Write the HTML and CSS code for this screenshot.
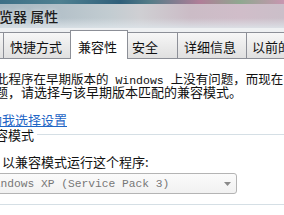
FILE: index.html
```html
<!DOCTYPE html>
<html lang="zh-CN">
<head>
<meta charset="utf-8">
<title>属性</title>
<link rel="stylesheet" href="styles.css">
</head>
<body>
<div class="window">
  <div class="titlebar"><span class="title">浏览器 属性</span></div>
  <div class="client">
    <div class="tabs">
      <div class="tab t0">常规</div>
      <div class="tab t1">快捷方式</div>
      <div class="tab sel">兼容性</div>
      <div class="tab t3">安全</div>
      <div class="tab t4">详细信息</div>
      <div class="tab t5">以前的版本</div>
    </div>
    <div class="panel">
      <p class="desc">
        <span class="line l1">如果此程序在早期版本的<span class="lat"> Windows </span>上没有问题，而现在</span>
        <span class="line l2">出现问题，请选择与该早期版本匹配的兼容模式。</span>
      </p>
      <a class="help">帮助我选择设置</a>
      <div class="group">
        <div class="group-head"><span class="group-label">兼容模式</span><span class="rule"></span></div>
        <div class="check">以兼容模式运行这个程序:</div>
        <div class="select"><span class="select-text">Windows XP (Service Pack 3)</span><svg class="arrow" width="7" height="4" viewBox="0 0 7 4"><path d="M0 0H7L3.5 4Z" fill="#8a8a8a"/></svg></div>
      </div>
      <div class="group2"><span class="rule"></span></div>
    </div>
  </div>
</div>
</body>
</html>
```

FILE: styles.css
```css
html, body {
  margin: 0;
  padding: 0;
}
body {
  width: 284px;
  height: 215px;
  overflow: hidden;
  background: #fff;
  font-family: "Noto Sans CJK SC", "Noto Sans", sans-serif;
  color: #111;
}
.window {
  width: 284px;
  height: 215px;
  overflow: hidden;
}
.titlebar {
  height: 28px;
  display: flex;
  align-items: center;
  overflow: hidden;
  background:
    linear-gradient(90deg, #3d6f86 0, #4f8091 60px, #2f5f7a 120px, #557c88 150px, #b07e98 200px, #8fa890 240px, #c896b0 284px) top left / 100% 4px no-repeat,
    linear-gradient(180deg, rgba(255,255,255,0) 0, rgba(255,255,255,0) 18px, rgba(222,229,234,0.85) 28px),
    linear-gradient(90deg, #a9b9c3 0, #b4c1c9 60px, #c2ccd1 110px, #cfcfd3 140px, #cbbcc6 190px, #d0bdc9 240px, #cbbfc9 284px);
}
.title {
  margin-left: -15px;
  padding-top: 3px;
  font-size: 14px;
  font-weight: 500;
  color: #1c1c1c;
  white-space: nowrap;
  text-shadow: 0 0 5px rgba(255,255,255,0.7);
}
.client {
  background: #eef0f2;
  padding-top: 2px;
}
.tabs {
  display: flex;
  align-items: flex-end;
  height: 28px;
  white-space: nowrap;
  font-size: 13px;
}
.tab {
  box-sizing: border-box;
  height: 26px;
  flex: none;
  border: 1px solid #8c8f97;
  border-bottom: none;
  margin-left: -1px;
  padding: 3px 0 0 6px;
  line-height: 22px;
  background: linear-gradient(180deg, #f7f7f7 0, #ececec 45%, #e0e0e0 100%);
  color: #111;
  overflow: hidden;
}
.t0 { width: 41px; margin-left: -37px; }
.t1 { width: 68px; padding-left: 6px; }
.sel {
  position: relative;
  z-index: 1;
  width: 58px;
  height: 29px;
  margin-bottom: -1px;
  padding-top: 5px;
  padding-left: 7px;
  background: #fff;
}
.t3 { width: 51px; padding-left: 4px; }
.t4 { width: 70px; padding-left: 6px; }
.t5 { width: 80px; padding-left: 5px; }
.panel {
  background: #fff;
  border-top: 1px solid #8c8f97;
  height: 160px;
  font-size: 13px;
}
.desc {
  margin: 13px 0 0;
  line-height: 13px;
  white-space: nowrap;
}
.line {
  display: block;
  height: 13px;
}
.l1 {
  margin-left: -29px;
  font-size: 12.5px;
}
.l2 { margin-left: -44px; }
.lat {
  font-family: "Liberation Mono", monospace;
  font-size: 11.5px;
  line-height: 0;
  white-space: pre;
}
.help {
  display: block;
  margin: 15px 0 0 -24px;
  height: 13px;
  line-height: 13px;
  color: #1f66c6;
  text-decoration: underline;
  white-space: nowrap;
}
.group {
  margin-top: 2px;
}
.group-head {
  display: flex;
  align-items: center;
  height: 13px;
  line-height: 13px;
  margin-left: -18px;
}
.group-label {
  flex: none;
  padding-right: 3px;
}
.rule {
  flex: 1;
  height: 1px;
  background: #d5dfe5;
}
.check {
  margin: 14px 0 0 2px;
  height: 13px;
  line-height: 13px;
  white-space: nowrap;
}
.select {
  box-sizing: border-box;
  display: flex;
  align-items: center;
  width: 254px;
  height: 21px;
  margin: 5px 0 0 -17px;
  border: 1px solid #b4b4b4;
  border-radius: 3px;
  background: linear-gradient(180deg, #fbfbfb 0, #f1f1f1 100%);
  padding: 0 5px 0 3px;
}
.select-text {
  flex: 1;
  font-family: "Liberation Mono", monospace;
  font-size: 11.25px;
  color: #777;
  white-space: nowrap;
}
.arrow {
  flex: none;
}
.group2 {
  display: flex;
  margin-top: 10px;
}
```
